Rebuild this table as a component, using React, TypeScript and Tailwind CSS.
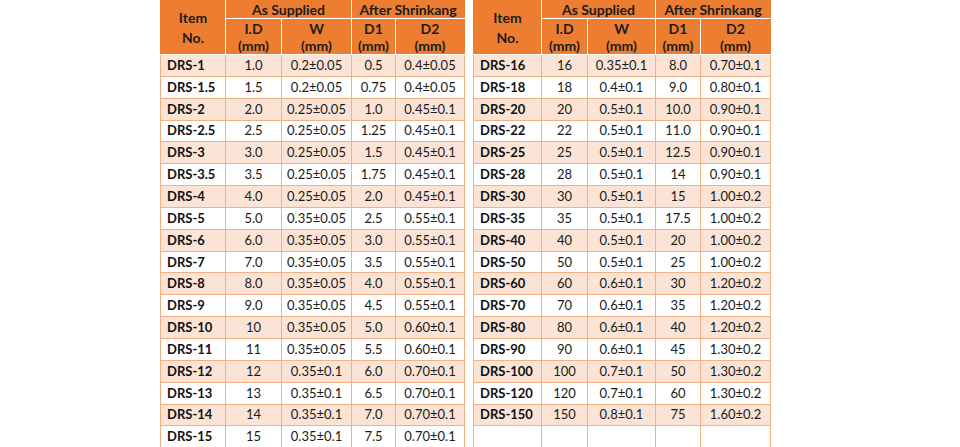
import React from 'react';

type Row = [string, string, string, string, string];

const leftRows: Row[] = [
  ['DRS-1', '1.0', '0.2±0.05', '0.5', '0.4±0.05'],
  ['DRS-1.5', '1.5', '0.2±0.05', '0.75', '0.4±0.05'],
  ['DRS-2', '2.0', '0.25±0.05', '1.0', '0.45±0.1'],
  ['DRS-2.5', '2.5', '0.25±0.05', '1.25', '0.45±0.1'],
  ['DRS-3', '3.0', '0.25±0.05', '1.5', '0.45±0.1'],
  ['DRS-3.5', '3.5', '0.25±0.05', '1.75', '0.45±0.1'],
  ['DRS-4', '4.0', '0.25±0.05', '2.0', '0.45±0.1'],
  ['DRS-5', '5.0', '0.35±0.05', '2.5', '0.55±0.1'],
  ['DRS-6', '6.0', '0.35±0.05', '3.0', '0.55±0.1'],
  ['DRS-7', '7.0', '0.35±0.05', '3.5', '0.55±0.1'],
  ['DRS-8', '8.0', '0.35±0.05', '4.0', '0.55±0.1'],
  ['DRS-9', '9.0', '0.35±0.05', '4.5', '0.55±0.1'],
  ['DRS-10', '10', '0.35±0.05', '5.0', '0.60±0.1'],
  ['DRS-11', '11', '0.35±0.05', '5.5', '0.60±0.1'],
  ['DRS-12', '12', '0.35±0.1', '6.0', '0.70±0.1'],
  ['DRS-13', '13', '0.35±0.1', '6.5', '0.70±0.1'],
  ['DRS-14', '14', '0.35±0.1', '7.0', '0.70±0.1'],
  ['DRS-15', '15', '0.35±0.1', '7.5', '0.70±0.1'],
];

const rightRows: Row[] = [
  ['DRS-16', '16', '0.35±0.1', '8.0', '0.70±0.1'],
  ['DRS-18', '18', '0.4±0.1', '9.0', '0.80±0.1'],
  ['DRS-20', '20', '0.5±0.1', '10.0', '0.90±0.1'],
  ['DRS-22', '22', '0.5±0.1', '11.0', '0.90±0.1'],
  ['DRS-25', '25', '0.5±0.1', '12.5', '0.90±0.1'],
  ['DRS-28', '28', '0.5±0.1', '14', '0.90±0.1'],
  ['DRS-30', '30', '0.5±0.1', '15', '1.00±0.2'],
  ['DRS-35', '35', '0.5±0.1', '17.5', '1.00±0.2'],
  ['DRS-40', '40', '0.5±0.1', '20', '1.00±0.2'],
  ['DRS-50', '50', '0.5±0.1', '25', '1.00±0.2'],
  ['DRS-60', '60', '0.6±0.1', '30', '1.20±0.2'],
  ['DRS-70', '70', '0.6±0.1', '35', '1.20±0.2'],
  ['DRS-80', '80', '0.6±0.1', '40', '1.20±0.2'],
  ['DRS-90', '90', '0.6±0.1', '45', '1.30±0.2'],
  ['DRS-100', '100', '0.7±0.1', '50', '1.30±0.2'],
  ['DRS-120', '120', '0.7±0.1', '60', '1.30±0.2'],
  ['DRS-150', '150', '0.8±0.1', '75', '1.60±0.2'],
  ['', '', '', '', ''],
];

interface TableProps {
  rows: Row[];
  widths: string[];
}

const SpecTable: React.FC<TableProps> = ({ rows, widths }) => {
  const head = 'bg-[#ED7D31] text-[#1c1c1c] font-bold text-center text-[14px] leading-[17px] border border-white';
  return (
    <table className="table-fixed border-collapse border border-[#ED7D31]">
      <colgroup>
        {widths.map((w, i) => (
          <col key={i} className={w} />
        ))}
      </colgroup>
      <thead>
        <tr className="h-[18px]">
          <th rowSpan={2} className={`${head} leading-[20px] border-l-[#ED7D31] border-t-[#ED7D31]`}>
            Item
            <br />
            No.
          </th>
          <th colSpan={2} className={`${head} border-t-[#ED7D31]`}>As Supplied</th>
          <th colSpan={2} className={`${head} border-t-[#ED7D31] border-r-[#ED7D31]`}>After Shrinkang</th>
        </tr>
        <tr className="h-[36px]">
          <th className={head}>I.D<br />(mm)</th>
          <th className={head}>W<br />(mm)</th>
          <th className={head}>D1<br />(mm)</th>
          <th className={`${head} border-r-[#ED7D31]`}>D2<br />(mm)</th>
        </tr>
      </thead>
      <tbody>
        {rows.map((r, i) => (
          <tr key={i} className={`h-[21.85px] ${i % 2 === 0 && r[0] ? 'bg-[#FBE4D5]' : 'bg-white'}`}>
            <td className="border border-[#F4B183] pl-[6px] font-bold text-[#111]">{r[0]}</td>
            {r.slice(1).map((v, j) => (
              <td key={j} className="border border-[#F4B183] text-center text-[#1a1a1a]">
                {v}
              </td>
            ))}
          </tr>
        ))}
      </tbody>
    </table>
  );
};

export default function App() {
  return (
    <div className="w-[960px] h-[447px] overflow-hidden bg-white font-['Lato','Noto_Sans',sans-serif] text-[13px] leading-none">
      <div className="flex gap-[8px] pl-[160px]">
        <SpecTable rows={leftRows} widths={['w-[65px]', 'w-[56px]', 'w-[70px]', 'w-[44px]', 'w-[69px]']} />
        <SpecTable rows={rightRows} widths={['w-[68px]', 'w-[46px]', 'w-[68px]', 'w-[45px]', 'w-[70px]']} />
      </div>
    </div>
  );
}
